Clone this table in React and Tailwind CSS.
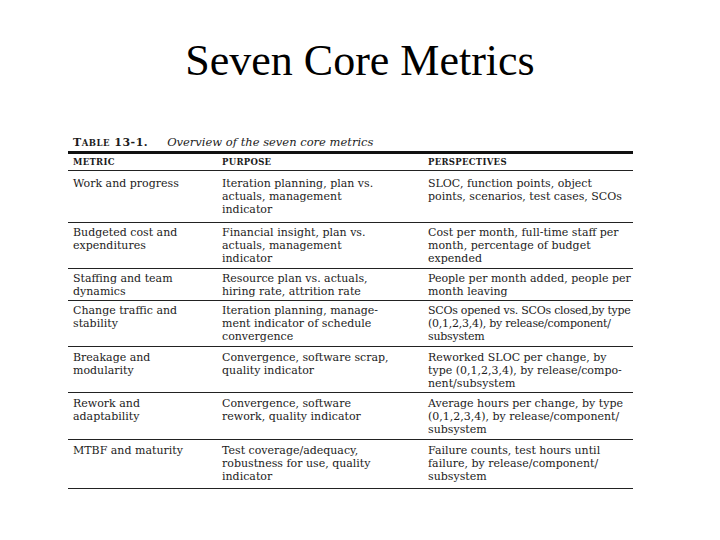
import React from 'react'

// rows of the scanned table; each cell is a list of already-wrapped lines
const ROWS = [
  {
    h: 'h-[52px]',
    pt: 'pt-[6px]',
    cells: [
      ['Work and progress'],
      ['Iteration planning, plan vs.', 'actuals, management', 'indicator'],
      ['SLOC, function points, object', 'points, scenarios, test cases, SCOs'],
    ],
  },
  {
    h: 'h-[46px]',
    pt: 'pt-[3px]',
    cells: [
      ['Budgeted cost and', 'expenditures'],
      ['Financial insight, plan vs.', 'actuals, management', 'indicator'],
      ['Cost per month, full-time staff per', 'month, percentage of budget', 'expended'],
    ],
  },
  {
    h: 'h-[32px]',
    pt: 'pt-[3px]',
    cells: [
      ['Staffing and team', 'dynamics'],
      ['Resource plan vs. actuals,', 'hiring rate, attrition rate'],
      ['People per month added, people per', 'month leaving'],
    ],
  },
  {
    h: 'h-[46px]',
    pt: 'pt-[3px]',
    cells: [
      ['Change traffic and', 'stability'],
      ['Iteration planning, manage-', 'ment indicator of schedule', 'convergence'],
      ['SCOs opened vs. SCOs closed,by type', '(0,1,2,3,4), by release/component/', 'subsystem'],
    ],
    tight: true,
  },
  {
    h: 'h-[46px]',
    pt: 'pt-[4px]',
    cells: [
      ['Breakage and', 'modularity'],
      ['Convergence, software scrap,', 'quality indicator'],
      ['Reworked SLOC per change, by', 'type (0,1,2,3,4), by release/compo-', 'nent/subsystem'],
    ],
  },
  {
    h: 'h-[47px]',
    pt: 'pt-[4px]',
    cells: [
      ['Rework and', 'adaptability'],
      ['Convergence, software', 'rework, quality indicator'],
      ['Average hours per change, by type', '(0,1,2,3,4), by release/component/', 'subsystem'],
    ],
  },
  {
    h: 'h-[49px]',
    pt: 'pt-[4px]',
    cells: [
      ['MTBF and maturity'],
      ['Test coverage/adequacy,', 'robustness for use, quality', 'indicator'],
      ['Failure counts, test hours until', 'failure, by release/component/', 'subsystem'],
    ],
  },
]

function Cell({ lines, tight }) {
  return (
    <div className={tight ? 'pl-[5px] tracking-[-0.25px]' : 'pl-[5px]'}>
      {lines.map((l, i) => (
        <div key={i} className="whitespace-nowrap leading-[13px]">
          {l}
        </div>
      ))}
    </div>
  )
}

export default function App() {
  return (
    <div className="w-[720px] h-[540px] bg-white overflow-hidden">
      <h1 className="pt-[39px] text-center text-[44px] leading-[44px] text-black font-['Liberation_Serif',serif]">
        Seven Core Metrics
      </h1>

      <div className="ml-[68px] w-[565px] mt-[52px] text-[#1c1c1c] font-['DejaVu_Serif',serif]">
        {/* caption */}
        <div className="flex items-baseline h-[14px] leading-[14px] pl-[5px] whitespace-nowrap">
          <span className="font-bold text-[11px] tracking-[0.5px]">
            T<span className="text-[8.5px]">ABLE</span> 13-1.
          </span>
          <span className="ml-[19px] italic text-[11.5px]">Overview of the seven core metrics</span>
        </div>

        <div className="mt-[2px] border-t-[3px] border-[#111]" />

        {/* header */}
        <div className="grid grid-cols-[149px_206px_1fr] h-[17px] items-center border-b-[1.5px] border-[#222] text-[8.5px] font-bold tracking-[0.3px]">
          <div className="pl-[5px]">METRIC</div>
          <div className="pl-[5px]">PURPOSE</div>
          <div className="pl-[5px]">PERSPECTIVES</div>
        </div>

        {ROWS.map((r, i) => (
          <div
            key={i}
            className={`grid grid-cols-[149px_206px_1fr] ${r.h} ${r.pt} border-b-[1.5px] border-[#222] text-[11px]`}
          >
            {r.cells.map((c, j) => (
              <Cell key={j} lines={c} tight={r.tight && j === 2} />
            ))}
          </div>
        ))}
      </div>
    </div>
  )
}
